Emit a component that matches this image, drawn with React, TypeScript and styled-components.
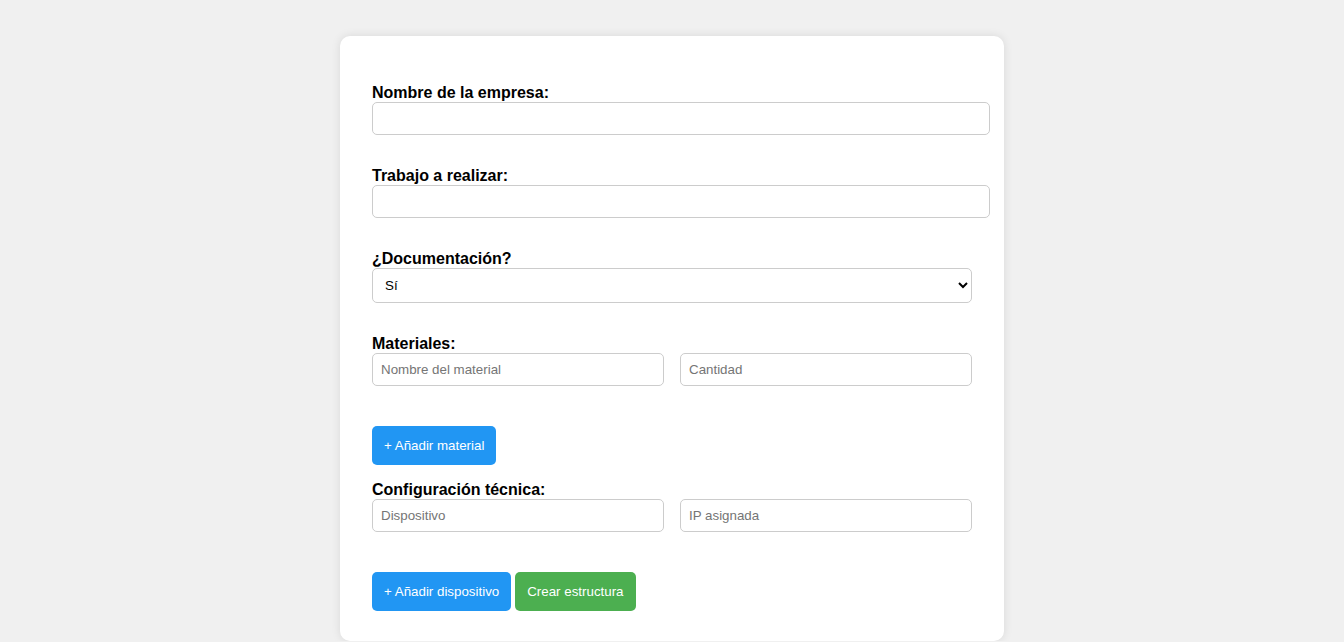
import React, { useState } from 'react';
import styled, { createGlobalStyle } from 'styled-components';

const GlobalStyle = createGlobalStyle`
  body {
    margin: 0;
    background-color: #f0f0f0;
    font-family: 'Liberation Sans', Arial, sans-serif;
  }
`;

interface Pair {
  first: string;
  second: string;
}

const App = () => {
  const [materials, setMaterials] = useState<Pair[]>([{ first: '', second: '' }]);
  const [devices, setDevices] = useState<Pair[]>([{ first: '', second: '' }]);

  const addMaterial = () => setMaterials((prev) => [...prev, { first: '', second: '' }]);
  const addDevice = () => setDevices((prev) => [...prev, { first: '', second: '' }]);

  return (
    <Page>
      <GlobalStyle />
      <Card>
        <Label htmlFor="empresa">Nombre de la empresa:</Label>
        <TextInput id="empresa" type="text" />

        <Label htmlFor="trabajo">Trabajo a realizar:</Label>
        <TextInput id="trabajo" type="text" />

        <Label htmlFor="doc">¿Documentación?</Label>
        <Select id="doc" defaultValue="si">
          <option value="si">Sí</option>
          <option value="no">No</option>
        </Select>

        <Label>Materiales:</Label>
        {materials.map((_, i) => (
          <Row key={i}>
            <RowInput type="text" placeholder="Nombre del material" />
            <RowInput type="text" placeholder="Cantidad" />
          </Row>
        ))}
        <Actions>
          <Button type="button" onClick={addMaterial}>
            + Añadir material
          </Button>
        </Actions>

        <Label>Configuración técnica:</Label>
        {devices.map((_, i) => (
          <Row key={i}>
            <RowInput type="text" placeholder="Dispositivo" />
            <RowInput type="text" placeholder="IP asignada" />
          </Row>
        ))}
        <Actions>
          <Button type="button" onClick={addDevice}>
            + Añadir dispositivo
          </Button>
          <Button type="button" variant="success">
            Crear estructura
          </Button>
        </Actions>
      </Card>
    </Page>
  );
};

const Page = styled.div`
  padding-top: 36px;
`;

const Card = styled.form`
  display: flex;
  flex-direction: column;
  width: 600px;
  margin: 0 auto;
  padding: 31px 32px 30px;
  background-color: #ffffff;
  border-radius: 10px;
  box-shadow: 0 0 10px rgba(0, 0, 0, 0.1);
`;

const Actions = styled.div`
  display: flex;
  gap: 4px;
  margin-top: 25px;
`;

const Label = styled.label`
  display: block;
  margin-top: 17px;
  font-size: 16px;
  font-weight: bold;
  color: #000;

  ${Actions} + & {
    margin-top: 16px;
  }
`;

const fieldCss = `
  font-family: 'Liberation Sans', Arial, sans-serif;
  font-size: 13.333px;
  padding: 8px;
  border: 1px solid #ccc;
  border-radius: 5px;
  background-color: #fff;
  color: #000;
  margin: 0 0 15px;

  &::placeholder {
    color: #757575;
  }
`;

const TextInput = styled.input`
  ${fieldCss}
  display: block;
  width: 100%;
  flex-shrink: 0;
`;

const Select = styled.select`
  ${fieldCss}
  display: block;
  width: 100%;
  height: 35px;
  box-sizing: border-box;
  flex-shrink: 0;
`;

const Row = styled.div`
  display: flex;
  gap: 16px;
`;

const RowInput = styled.input`
  ${fieldCss}
  flex: 1;
  min-width: 0;
  box-sizing: border-box;
`;

const Button = styled.button<{ variant?: 'primary' | 'success' }>`
  font-family: 'Liberation Sans', Arial, sans-serif;
  font-size: 13.333px;
  line-height: 15px;
  padding: 12px;
  border: none;
  border-radius: 5px;
  color: #fff;
  cursor: pointer;
  background-color: ${({ variant }) => (variant === 'success' ? '#4caf50' : '#2196f3')};
`;

export default App;
